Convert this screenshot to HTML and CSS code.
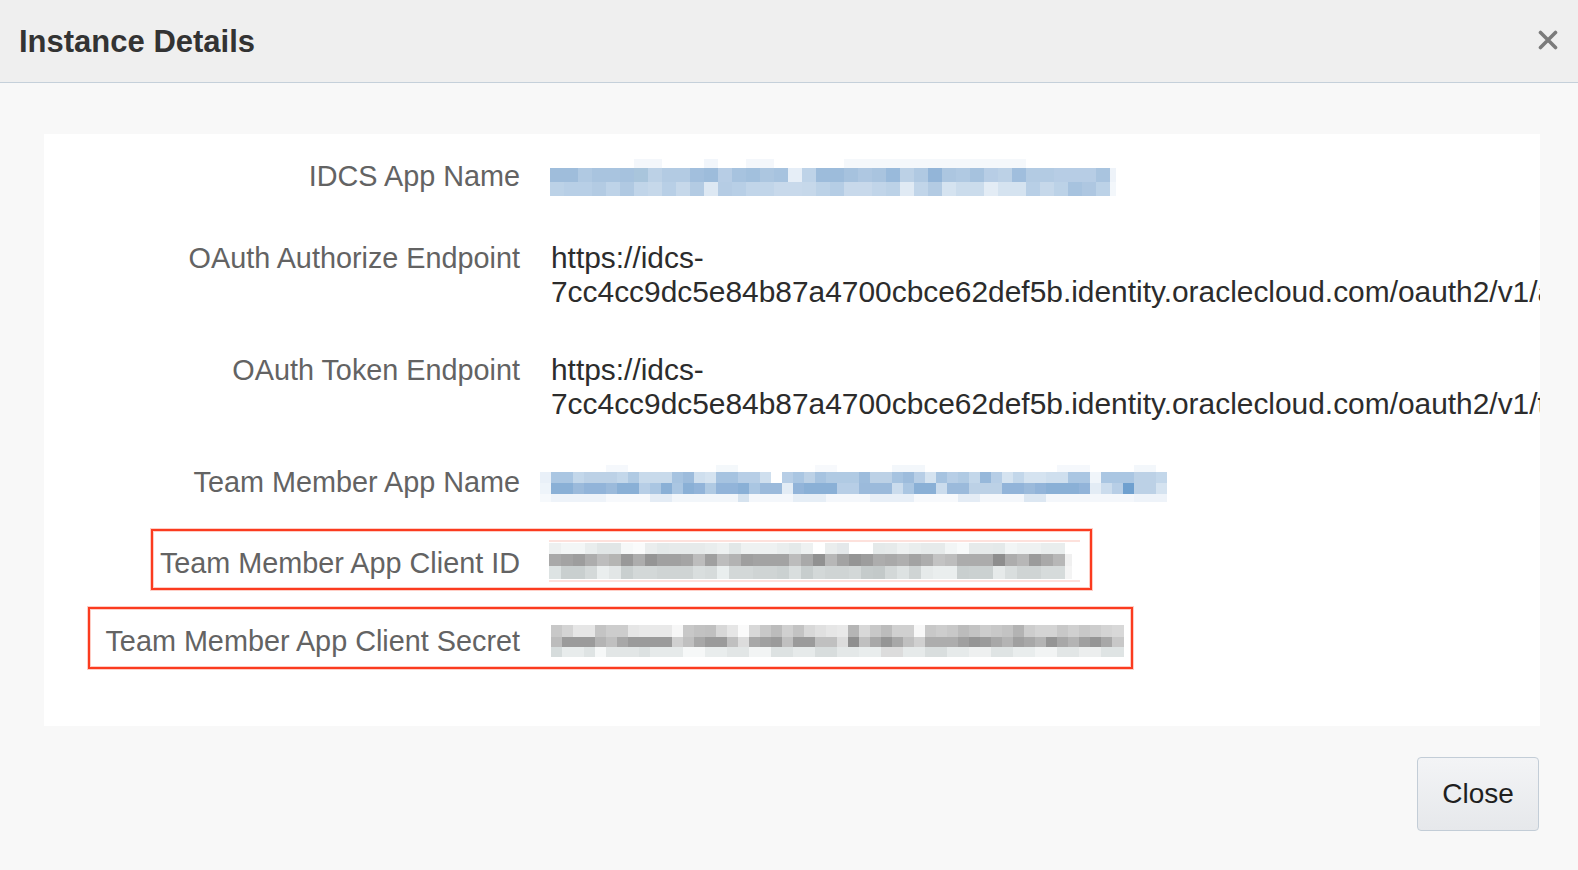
FILE: index.html
```html
<!DOCTYPE html>
<html lang="en">
<head>
<meta charset="utf-8">
<title>Instance Details</title>
<link rel="stylesheet" href="styles.css">
</head>
<body>
<div class="dialog">
  <header class="dlg-header">
    <h1 class="dlg-title">Instance Details</h1>
    <button class="dlg-x" aria-label="Close">
      <svg width="20" height="20" viewBox="0 0 20 20"><path d="M2.5 2.5 L17.5 17.5 M17.5 2.5 L2.5 17.5" stroke="#7b7b7b" stroke-width="3.6" stroke-linecap="round" fill="none"/></svg>
    </button>
  </header>
  <main class="dlg-body">
    <section class="panel">
      <div class="row">
        <div class="label">IDCS App Name</div>
        <div class="value"><div class="blur blur-idcs"></div></div>
      </div>
      <div class="row">
        <div class="label">OAuth Authorize Endpoint</div>
        <div class="value text">https://idcs-<br>7cc4cc9dc5e84b87a4700cbce62def5b.identity.oraclecloud.com/oauth2/v1/authorize</div>
      </div>
      <div class="row">
        <div class="label">OAuth Token Endpoint</div>
        <div class="value text">https://idcs-<br>7cc4cc9dc5e84b87a4700cbce62def5b.identity.oraclecloud.com/oauth2/v1/token</div>
      </div>
      <div class="row">
        <div class="label">Team Member App Name</div>
        <div class="value"><div class="blur blur-team"></div></div>
      </div>
      <div class="row">
        <div class="label">Team Member App Client ID</div>
        <div class="value"><div class="blur blur-cid"></div></div>
        <span class="mark mark-id"></span>
      </div>
      <div class="row">
        <div class="label">Team Member App Client Secret</div>
        <div class="value"><div class="blur blur-secret"></div></div>
        <span class="mark mark-secret"></span>
      </div>
    </section>
    <footer class="dlg-footer">
      <button class="btn">Close</button>
    </footer>
  </main>
</div>
</body>
</html>
```

FILE: styles.css
```css
* { box-sizing: border-box; }
html, body { margin: 0; padding: 0; }
body {
  background: #f8f8f8;
  font-family: "Liberation Sans", Arial, sans-serif;
  width: 1578px;
  height: 870px;
  overflow: hidden;
}
.dialog { display: flex; flex-direction: column; }

.dlg-header {
  height: 83px;
  background: #efefef;
  border-bottom: 1px solid #c5d0da;
  display: flex;
  align-items: center;
  justify-content: space-between;
  padding: 2px 20px 0 19px;
}
.dlg-title {
  margin: 0;
  font-size: 31px;
  font-weight: bold;
  color: #333;
}
.dlg-x {
  border: 0;
  background: none;
  padding: 0;
  width: 20px;
  height: 20px;
  display: flex;
  margin-top: -4px;
}

.dlg-body {
  padding: 51px 38px 0 44px;
  display: flex;
  flex-direction: column;
}

.panel {
  background: #fff;
  padding: 25px 0 68px;
  display: flex;
  flex-direction: column;
  gap: 44px;
  overflow: hidden;
}
.row {
  position: relative;
  display: grid;
  grid-template-columns: 476px 1fr;
  column-gap: 29px;
  align-items: start;
}
.label {
  text-align: right;
  font-size: 28.8px;
  line-height: 34px;
  color: #636363;
  white-space: nowrap;
}
.value { min-width: 0; }
.value.text {
  font-size: 29.9px;
  line-height: 34px;
  color: #2c2c2c;
  white-space: nowrap;
  padding-left: 2px;
}

.blur { background-repeat: no-repeat; }

.blur-idcs {
  width: 566px;
  height: 38px;
  margin-left: 1px;
  background:
    linear-gradient(90deg, #9fbddb 0 28px, #b0c9e2 0 42px, #a9c4df 0 70px, #a6c2de 0 84px, #a9c5dc 0 98px, #bcd1e6 0 112px, #b3cbe3 0 140px, #a2bfdd 0 154px, #9dbcdb 0 168px, #b7cde5 0 182px, #a7c3df 0 196px, #a2c0dd 0 210px, #acc6e0 0 224px, #a7c3df 0 238px, #e6eef7 0 252px, #bed3e8 0 266px, #9dbcdb 0 294px, #a6c2de 0 308px, #aec7e1 0 322px, #a9c4df 0 336px, #99badb 0 350px, #bcd1e6 0 364px, #b0c9e2 0 378px, #93b5d8 0 392px, #acc6e0 0 406px, #b0c9e2 0 420px, #a6c2de 0 434px, #b7cde5 0 448px, #bcd1e6 0 462px, #a0bedd 0 476px, #b3cbe3 0 504px, #b7cde5 0 546px, #a9c4df 0 560px, #eef3f9 0 566px) 0 9px / 566px 14px no-repeat,
    linear-gradient(90deg, #bcd2e7 0 14px, #b8cfe6 0 42px, #b3cbe3 0 56px, #bed3e8 0 70px, #b0c9e2 0 84px, #c1d5e9 0 98px, #c6d8ea 0 112px, #b8cfe6 0 126px, #c6d8ea 0 140px, #b3cbe3 0 154px, #dde8f3 0 168px, #b5cce4 0 182px, #b8cfe6 0 196px, #c1d5e9 0 224px, #c8d9eb 0 252px, #c6d8ea 0 266px, #bcd2e7 0 280px, #b5cde5 0 294px, #c8d9eb 0 322px, #c1d5e9 0 336px, #bcd2e7 0 350px, #e0eaf4 0 364px, #c1d5e9 0 378px, #b3cbe3 0 392px, #d5e3f0 0 406px, #cbdcec 0 434px, #e3ecf5 0 448px, #d5e3f0 0 476px, #b8cfe6 0 490px, #c6d8ea 0 504px, #bcd2e7 0 518px, #a7c3df 0 532px, #aec7e1 0 546px, #bcd2e7 0 560px, #f3f7fb 0 566px) 0 23px / 566px 14px no-repeat,
    linear-gradient(90deg, transparent 0 84px, #f4f7fb 0 112px, transparent 0 154px, #f2f6fb 0 168px, transparent 0 196px, #f4f7fb 0 224px, transparent 0 294px, #f5f8fb 0 476px, transparent 0) 0 0 / 566px 9px no-repeat;
}

.blur-team {
  width: 627px;
  height: 37px;
  margin-left: -9px;
  background:
    linear-gradient(90deg, #e9f0f8 0 11px, #aac6e2 0 33px, #c3d7ea 0 44px, #bcd1e6 0 77px, #c3d7ea 0 88px, #b0cae3 0 99px, #c8daeb 0 132px, #a6c3e0 0 143px, #9dbcdc 0 154px, #cfdfee 0 165px, #d5e3f0 0 176px, #a6c3e0 0 198px, #b7cee6 0 220px, #cfdfee 0 231px, #ffffff 0 242px, #b7cee6 0 253px, #aac6e2 0 264px, #bcd1e6 0 275px, #a6c3e0 0 286px, #b0cae3 0 319px, #9dbcdc 0 330px, #bcd1e6 0 352px, #a6c3e0 0 363px, #9dbcdc 0 374px, #b7cee6 0 385px, #d5e3f0 0 396px, #a6c3e0 0 407px, #b7cee6 0 418px, #b0cae3 0 429px, #c3d7ea 0 440px, #97b8da 0 451px, #b7cee6 0 462px, #d5e3f0 0 473px, #c3d7ea 0 484px, #d5e3f0 0 506px, #cfdfee 0 528px, #aac6e2 0 550px, #f0f5fa 0 561px, #aac6e2 0 594px, #bcd1e6 0 616px, #c3d7ea 0 627px) 0 7px / 627px 11px no-repeat,
    linear-gradient(90deg, #eef4fa 0 11px, #8ab0d6 0 33px, #9bbadb 0 44px, #92b4d9 0 66px, #9bbadb 0 77px, #8ab0d6 0 99px, #b7cee6 0 110px, #aac6e2 0 121px, #8ab0d6 0 132px, #aac6e2 0 143px, #8ab0d6 0 154px, #92b4d9 0 165px, #b0cae3 0 176px, #92b4d9 0 198px, #8ab0d6 0 209px, #aac6e2 0 220px, #9bbadb 0 242px, #e3ecf5 0 253px, #92b4d9 0 264px, #8ab0d6 0 297px, #b7cee6 0 319px, #9bbadb 0 352px, #cbdced 0 363px, #aac6e2 0 374px, #8ab0d6 0 396px, #cbdced 0 407px, #9bbadb 0 429px, #bcd1e6 0 462px, #92b4d9 0 484px, #9bbadb 0 495px, #92b4d9 0 506px, #8ab0d6 0 539px, #92b4d9 0 550px, #e3ecf5 0 561px, #cbdced 0 572px, #b7cee6 0 583px, #6fa0cf 0 594px, #bcd1e6 0 616px, #d5e3f0 0 627px) 0 18px / 627px 11px no-repeat,
    linear-gradient(90deg, transparent 0 66px, #f5f8fc 0 88px, transparent 0 176px, #f4f8fb 0 198px, transparent 0 275px, #f7f9fc 0 297px, transparent 0 352px, #f3f7fb 0 385px, transparent 0 517px, #f5f8fc 0 550px, transparent 0 594px, #f3f7fb 0 616px, transparent 0) 0 0 / 627px 7px no-repeat,
    linear-gradient(90deg, #f6f9fc 0 11px, #eef3f9 0 66px, #f7f9fc 0 110px, #e4ecf5 0 132px, #f2f6fa 0 198px, #d6e3ef 0 209px, #f4f7fb 0 253px, #e6eef6 0 286px, #f4f7fb 0 330px, #e8eff7 0 374px, #f7f9fc 0 418px, #e4ecf5 0 440px, #f4f7fb 0 484px, #dce7f2 0 506px, #f4f7fb 0 594px, #eef3f9 0 627px) 0 29px / 627px 8px no-repeat;
}

.blur-cid {
  width: 531px;
  height: 42px;
  margin: -6px 0 -2px;
  background:
    linear-gradient(#fde1dc, #fde1dc) 0 0 / 531px 2px no-repeat,
    linear-gradient(#fde1dc, #fde1dc) 0 40px / 531px 2px no-repeat,
    linear-gradient(90deg, #edf0f0 0 12px, #f3f6f6 0 36px, #e9eded 0 48px, #e1e6e6 0 72px, #f6f8f8 0 84px, #fafbfb 0 96px, #eaeded 0 108px, #e4e9e9 0 120px, #e6eaea 0 156px, #e9eded 0 168px, #eef1f1 0 180px, #e2e7e7 0 192px, #eef1f1 0 228px, #e9eded 0 240px, #e4e9e9 0 252px, #eef1f1 0 264px, #ffffff 0 276px, #eaeded 0 288px, #e4e8ea 0 300px, #ffffff 0 324px, #e4e9e9 0 336px, #e6eaea 0 348px, #eef1f1 0 360px, #e9eded 0 372px, #e6eaea 0 396px, #f2f5f5 0 408px, #f8fafa 0 420px, #e6eaea 0 444px, #e4e9e9 0 456px, #f2f5f5 0 468px, #eef1f1 0 492px, #e9eded 0 516px, #ffffff 0 523px) 0 3px / 523px 11px no-repeat,
    linear-gradient(90deg, #a9a9a9 0 12px, #a3a3a3 0 24px, #9d9d9d 0 36px, #adadad 0 48px, #bdbdbd 0 60px, #b5b5b3 0 72px, #999999 0 84px, #adadad 0 96px, #959595 0 108px, #a1a1a1 0 132px, #a5a5a5 0 144px, #bdbdbd 0 156px, #a0a0a0 0 168px, #bdbdbd 0 180px, #b3b3b3 0 192px, #9f9f9f 0 204px, #a3a3a3 0 240px, #bcbcbc 0 252px, #a9a9a9 0 264px, #919191 0 276px, #b7b7b7 0 288px, #a3a3a3 0 300px, #959595 0 312px, #9d9d9d 0 324px, #adadad 0 336px, #a9a9a9 0 348px, #afafaf 0 360px, #a3a3a3 0 372px, #adadad 0 384px, #c3c3c3 0 396px, #bdbdbd 0 408px, #acacac 0 444px, #8e8e8e 0 456px, #adadad 0 468px, #b7b7b7 0 480px, #9b9b9b 0 492px, #a9a9a9 0 504px, #b7b7b7 0 516px, #f0f0f0 0 523px) 0 14px / 523px 12px no-repeat,
    linear-gradient(90deg, #dde3e3 0 12px, #c9cfcf 0 36px, #d4d9d9 0 48px, #eaeeee 0 60px, #e2e6e6 0 72px, #c9cfcf 0 84px, #d3d8d8 0 108px, #cfd4d4 0 144px, #d9dede 0 156px, #d6dbdb 0 168px, #e9eeee 0 180px, #d3d8d8 0 204px, #cfd4d4 0 228px, #cbd1d1 0 240px, #d9dede 0 252px, #c7cdcd 0 264px, #d3d8d8 0 276px, #cfd4d4 0 300px, #d3d8d8 0 312px, #c5cbcb 0 324px, #c3c9c9 0 336px, #d3d8d8 0 348px, #dde2e2 0 360px, #cfd4d4 0 372px, #e6eaea 0 384px, #eaeeee 0 408px, #c9cfcf 0 420px, #cbd1d1 0 444px, #e6eaea 0 456px, #d9dede 0 468px, #cfd4d4 0 492px, #d6dbdb 0 516px, #f4f4f4 0 523px) 0 26px / 523px 13px no-repeat;
}

.blur-secret {
  width: 573px;
  height: 34px;
  margin-left: 2px;
  background:
    linear-gradient(90deg, #c8c8c8 0 11px, #d4d4d4 0 22px, #e6e6e6 0 44px, #c4c4c4 0 55px, #cdcdcd 0 77px, #e6e6e6 0 88px, #e9e9e9 0 121px, #f7f7f7 0 132px, #c8c8c8 0 143px, #c2c2c2 0 154px, #c0c0c0 0 165px, #d8d8d8 0 176px, #e6e6e6 0 187px, #fafafa 0 198px, #d8d8d8 0 209px, #c8c8c8 0 220px, #bcbcbc 0 231px, #d0d0d0 0 242px, #c3c3c3 0 253px, #d8d8d8 0 264px, #e0e0e0 0 275px, #e6e6e6 0 286px, #e9e9e9 0 297px, #b5b5b5 0 308px, #d8d8d8 0 319px, #c8c8c8 0 330px, #bcbcbc 0 341px, #d0d0d0 0 363px, #f8f8f8 0 374px, #c8c8c8 0 385px, #cdcdcd 0 396px, #c8c8c8 0 407px, #bcbcbc 0 418px, #c3c3c3 0 429px, #cdcdcd 0 440px, #c8c8c8 0 451px, #c3c3c3 0 462px, #b3b3b3 0 473px, #cdcdcd 0 484px, #d4d4d4 0 506px, #c8c8c8 0 517px, #d0d0d0 0 528px, #c8c8c8 0 539px, #cdcdcd 0 550px, #d4d4d4 0 561px, #d8d8d8 0 573px) 0 1px / 573px 12px no-repeat,
    linear-gradient(90deg, #bcbcbc 0 11px, #9b9b9b 0 44px, #b4b4b4 0 55px, #c0c0c0 0 66px, #a8a8a8 0 77px, #9b9b9b 0 121px, #d0d0d0 0 132px, #c0c0c0 0 143px, #a8a8a8 0 154px, #9b9b9b 0 176px, #c0c0c0 0 187px, #dcdcdc 0 198px, #a8a8a8 0 209px, #a0a0a0 0 220px, #9b9b9b 0 231px, #c0c0c0 0 242px, #9b9b9b 0 264px, #c0c0c0 0 286px, #dcdcdc 0 297px, #8f8f8f 0 308px, #c0c0c0 0 319px, #a8a8a8 0 330px, #959595 0 341px, #a8a8a8 0 352px, #c0c0c0 0 363px, #d0d0d0 0 374px, #adadad 0 407px, #a0a0a0 0 418px, #959595 0 429px, #9b9b9b 0 440px, #a8a8a8 0 451px, #b4b4b4 0 462px, #a0a0a0 0 473px, #a8a8a8 0 484px, #b4b4b4 0 495px, #959595 0 506px, #a8a8a8 0 517px, #b4b4b4 0 528px, #a0a0a0 0 539px, #959595 0 550px, #a8a8a8 0 561px, #c8c8c8 0 573px) 0 13px / 573px 10px no-repeat,
    linear-gradient(90deg, #d6dcdc 0 11px, #e8ecec 0 33px, #dfe4e4 0 44px, #f6f8f8 0 55px, #e2e6e6 0 88px, #dce1e1 0 99px, #e6eaea 0 132px, #f6f8f8 0 154px, #e9eded 0 176px, #e2e6e6 0 198px, #f2f4f4 0 220px, #dde2e2 0 242px, #e6eaea 0 264px, #d8dddd 0 286px, #e4e8e8 0 308px, #e9eded 0 330px, #dcdcdc 0 352px, #e6eaea 0 374px, #d9dede 0 396px, #e6eaea 0 418px, #eef0f0 0 440px, #dfe4e4 0 462px, #e9eded 0 484px, #f2f4f4 0 506px, #e2e6e6 0 528px, #eceeee 0 550px, #dfe4e4 0 573px) 0 23px / 573px 10px no-repeat;
}

.mark {
  position: absolute;
  border: 2px solid #fb3b1f;
  box-shadow: 0 0 0 1px rgba(251, 80, 50, 0.28), inset 0 0 0 1px rgba(251, 80, 50, 0.28);
  pointer-events: none;
}
.mark-id { left: 107px; top: -17px; width: 941px; height: 61px; }
.mark-secret { left: 44px; top: -17px; width: 1045px; height: 62px; }

.dlg-footer {
  display: flex;
  justify-content: flex-end;
  padding-top: 31px;
}
.btn {
  width: 122px;
  height: 74px;
  border: 1px solid #c3cdd7;
  border-radius: 4px;
  background: linear-gradient(#f3f4f6, #e6e8eb);
  font-family: "Liberation Sans", Arial, sans-serif;
  font-size: 28px;
  color: #1f1f1f;
  padding: 0;
  margin-right: 1px;
}
```
